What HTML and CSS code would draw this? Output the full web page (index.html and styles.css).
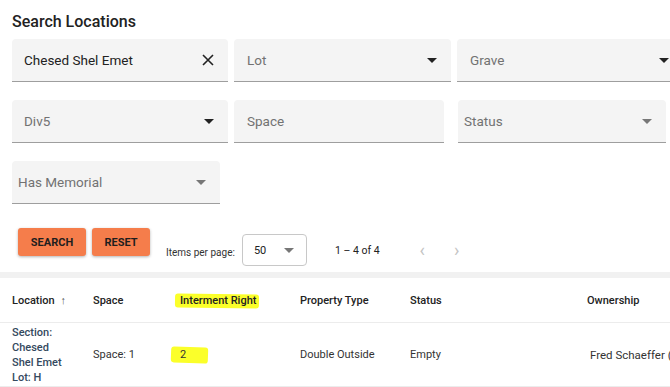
FILE: index.html
```html
<!DOCTYPE html>
<html lang="en">
<head>
    <meta charset="UTF-8">
    <meta name="viewport" content="width=device-width, initial-scale=1.0">
    <title>Search Locations</title>
    <link rel="stylesheet" href="styles.css">
</head>
<body>
    <div class="search">
        <h1>Search Locations</h1>

        <div class="field-row">
            <div class="field w216">
                <span class="value">Chesed Shel Emet</span>
                <svg class="clear" width="12" height="12" viewBox="0 0 12 12"><path d="M1 1L11 11M11 1L1 11" stroke="#222" stroke-width="1.6"/></svg>
            </div>
            <div class="field w217 pad-13">
                <span class="label">Lot</span>
                <span class="caret"></span>
            </div>
            <div class="field w216 pad-13">
                <span class="label">Grave</span>
                <span class="caret"></span>
            </div>
        </div>

        <div class="field-row">
            <div class="field w216">
                <span class="label">Div5</span>
                <span class="caret"></span>
            </div>
            <div class="field w209 pad-13">
                <span class="label">Space</span>
            </div>
            <div class="field w208 pad-6">
                <span class="label">Status</span>
                <span class="caret light"></span>
            </div>
        </div>

        <div class="field-row last">
            <div class="field w208 pad-6">
                <span class="label">Has Memorial</span>
                <span class="caret light"></span>
            </div>
        </div>

        <div class="toolbar">
            <button class="btn">SEARCH</button>
            <button class="btn">RESET</button>
            <span class="per-page">Items per page:</span>
            <div class="page-select">
                <span>50</span>
                <span class="caret light"></span>
            </div>
            <span class="range">1 – 4 of 4</span>
            <span class="nav">&lsaquo;</span>
            <span class="nav">&rsaquo;</span>
        </div>
    </div>

    <div class="band"></div>

    <table class="results">
        <colgroup>
            <col style="width:93px">
            <col style="width:87px">
            <col style="width:120px">
            <col style="width:110px">
            <col style="width:177px">
            <col style="width:225px">
        </colgroup>
        <thead>
            <tr>
                <th>Location <span class="sort">&#8593;</span></th>
                <th>Space</th>
                <th><span class="mark mark-head">Interment Right</span></th>
                <th>Property Type</th>
                <th>Status</th>
                <th>Ownership</th>
            </tr>
        </thead>
        <tbody>
            <tr>
                <td class="loc">Section:<br>Chesed<br>Shel Emet<br>Lot: H</td>
                <td>Space: 1</td>
                <td><span class="mark mark-cell">2</span></td>
                <td>Double Outside</td>
                <td>Empty</td>
                <td class="owner">Fred Schaeffer (Owner)</td>
            </tr>
        </tbody>
    </table>
</body>
</html>
```

FILE: styles.css
```css
body { margin: 0; font-family: Roboto, "Liberation Sans", sans-serif; color: #222; background: #fff; overflow: hidden; }
.search { padding: 0 0 0 12px; }
h1 { margin: 0; padding-top: 10px; font-size: 16px; line-height: 24px; font-weight: 500; color: #222; }

.field-row { display: flex; gap: 6px; margin-top: 5px; margin-bottom: 18px; }
.field-row + .field-row { margin-top: 0; }
.field-row.last { margin-bottom: 0; }
.field { flex: none; height: 42px; background: #f4f4f4; border-bottom: 1px solid #9e9e9e; border-radius: 4px 4px 0 0; display: flex; align-items: center; justify-content: space-between; padding: 0 14px 0 12px; box-sizing: content-box; font-size: 13.5px; }
.w216 { width: 190px; }
.w217 { width: 191px; }
.w209 { width: 183px; }
.w208 { width: 188px; }
.pad-13 { padding-left: 13px; }
.w217.pad-13 { width: 190px; }
.w216.pad-13 { width: 199px; padding-right: 6px; }
.w209.pad-13 { width: 183px; }
.pad-6 { padding-left: 6px; }
.w208.pad-6 { width: 188px; }
.field-row:nth-child(3) .field:nth-child(3) { margin-left: 8px; }

.value { color: #222; }
.label { color: #727272; }
.caret { width: 0; height: 0; border-left: 5px solid transparent; border-right: 5px solid transparent; border-top: 5px solid #222; }
.caret.light { border-top-color: #777; }

.toolbar { display: flex; align-items: flex-start; height: 68px; box-sizing: border-box; }
.btn { margin-top: 24px; height: 28px; padding: 0 12px; border: none; border-radius: 3px; background: #f57d4b; color: #1e1e1e; font-family: Roboto, "Liberation Sans", sans-serif; font-size: 11px; font-weight: 700; box-shadow: 0 1px 3px rgba(0,0,0,0.3); }
.btn:first-child { margin-left: 6px; width: 68px; }
.btn + .btn { margin-left: 6px; width: 58px; }
.per-page { margin: 42px 0 0 16px; font-size: 10px; color: #333; line-height: 14px; }
.page-select { margin: 30px 0 0 7px; width: 65px; height: 32px; border: 1px solid #c8c8c8; border-radius: 4px; box-sizing: border-box; display: flex; align-items: center; justify-content: space-between; padding: 0 12px 0 11px; font-size: 11px; color: #222; }
.range { margin: 40px 0 0 28px; font-size: 10.5px; line-height: 14px; color: #222; }
.nav { margin: 36px 0 0 0; font-size: 18px; line-height: 20px; color: #c4c4c4; }
.range + .nav { margin-left: 40px; }
.nav + .nav { margin-left: 29px; }

.band { height: 6px; background: #f1f1f1; }

.results { border-collapse: collapse; table-layout: fixed; width: 812px; font-size: 11px; }
.results th { height: 43px; text-align: left; font-weight: 500; color: #222; padding: 1px 0 0; border-bottom: 1px solid #ececec; vertical-align: middle; }
.results td { height: 63px; padding: 0; color: #333; vertical-align: middle; border-bottom: 1px solid #ececec; }
.results th:first-child, .results td:first-child { padding-left: 12px; padding-right: 20px; }
.results td.loc { line-height: 15px; font-weight: 500; color: #34495e; }
.results td.owner { padding-left: 3px; white-space: nowrap; font-size: 11.5px; }
.sort { color: #555; margin-left: 3px; }

.mark { position: relative; z-index: 0; }
.mark::before { content: ""; position: absolute; z-index: -1; background: #fbff2a; border-radius: 3px; }
.mark-head::before { left: -5px; right: -3px; top: 0; bottom: -1px; transform: rotate(0.8deg); }
.mark-cell::before { left: -9px; width: 37px; top: -1px; bottom: -2px; transform: rotate(2deg); }
```
